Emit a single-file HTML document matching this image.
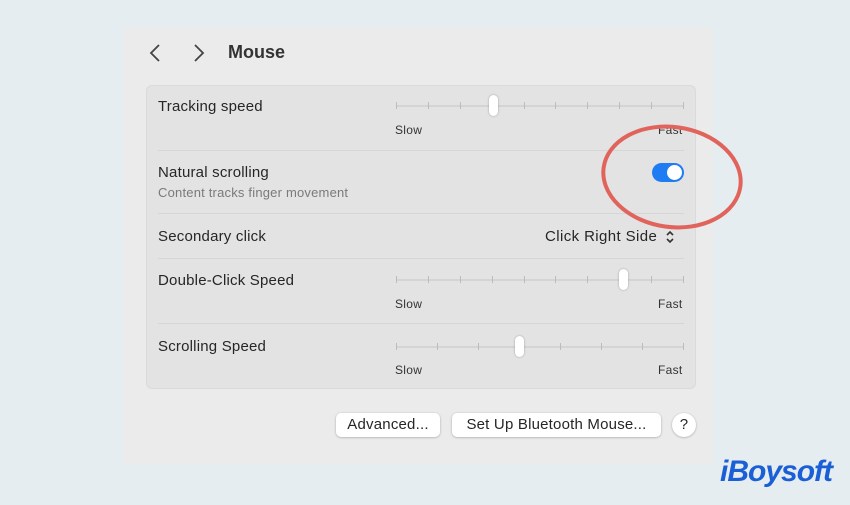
<!DOCTYPE html>
<html><head><style>
body{margin:0;width:850px;height:505px;background:#e5edf1;position:relative;overflow:hidden;font-family:"Liberation Sans",sans-serif;color:#262626}
.a{position:absolute}
.panel{left:124px;top:28px;width:589px;height:436px;background:#ebebeb}
.box{left:146px;top:85px;width:548px;height:302px;background:#e3e3e3;border:1px solid #dadada;border-radius:6px}
.hr{height:1px;background:#d6d6d6;left:158px;width:526px}
.lbl{font-size:15px;left:158px;letter-spacing:0.2px}
.track{height:2px;background:#d4d4d4;left:396px;width:288px}
.tick{width:1px;height:7px;background:#bcbcbc;top:-3px}
.knob{width:9px;height:21px;background:#fff;border-radius:5px;box-shadow:0 0 2px rgba(0,0,0,.3);top:-10px}
.sf{font-size:12px;color:#333;letter-spacing:0.3px}
.btn{background:#fff;border-radius:5px;box-shadow:0 0.5px 2px rgba(0,0,0,.3);font-size:15px;text-align:center;line-height:24px;top:413px;height:24px;letter-spacing:0.2px}
</style></head><body>
<div class="a panel"></div>
<svg class="a" style="left:146px;top:42px" width="70" height="22"><path d="M13 3 L5 11 L13 19" fill="none" stroke="#444" stroke-width="1.8"/><path d="M49 3 L57 11 L49 19" fill="none" stroke="#444" stroke-width="1.8"/></svg>
<div class="a" style="left:228px;top:42px;font-size:18px;font-weight:bold;color:#333">Mouse</div>
<div class="a box"></div>
<div class="a lbl" style="top:98px">Tracking speed</div>
<div class="a hr" style="top:150px"></div>
<div class="a lbl" style="top:164px">Natural scrolling</div>
<div class="a" style="left:158px;top:185px;font-size:13px;color:#7a7a7a;letter-spacing:0.2px">Content tracks finger movement</div>
<div class="a hr" style="top:213px"></div>
<div class="a lbl" style="top:228px">Secondary click</div>
<div class="a" style="left:545px;top:228px;font-size:15px;letter-spacing:0.4px">Click Right Side</div>
<svg class="a" style="left:664px;top:229px" width="12" height="16"><path d="M3 6 L6 3 L9 6 M3 10 L6 13 L9 10" fill="none" stroke="#333" stroke-width="1.6"/></svg>
<div class="a hr" style="top:258px"></div>
<div class="a lbl" style="top:272px">Double-Click Speed</div>
<div class="a hr" style="top:323px"></div>
<div class="a lbl" style="top:338px">Scrolling Speed</div>

<div id="s1" class="a track" style="top:105px"></div>
<div class="a sf" style="left:395px;top:123px">Slow</div><div class="a sf" style="left:658px;top:123px">Fast</div>
<div id="s2" class="a track" style="top:279px"></div>
<div class="a sf" style="left:395px;top:297px">Slow</div><div class="a sf" style="left:658px;top:297px">Fast</div>
<div id="s3" class="a track" style="top:346px"></div>
<div class="a sf" style="left:395px;top:363px">Slow</div><div class="a sf" style="left:658px;top:363px">Fast</div>

<div class="a" style="left:652px;top:163px;width:32px;height:19px;border-radius:10px;background:#1f7cf2"></div>
<div class="a" style="left:667px;top:165px;width:15px;height:15px;border-radius:50%;background:#fff"></div>
<svg class="a" style="left:595px;top:115px" width="160" height="125"><ellipse cx="77" cy="62" rx="69" ry="50" transform="rotate(8 77 62)" fill="none" stroke="#e0645c" stroke-width="4"/></svg>

<div class="a btn" style="left:336px;width:104px">Advanced...</div>
<div class="a btn" style="left:452px;width:209px">Set Up Bluetooth Mouse...</div>
<div class="a btn" style="left:672px;width:24px;border-radius:50%">?</div>
<div class="a" style="left:720px;top:455px;font-size:30px;font-weight:bold;font-style:italic;color:#1b5fd6;letter-spacing:-1px">iBoysoft</div>
<script>
function sl(id,n,k){var t=document.getElementById(id);for(var i=0;i<=n;i++){var d=document.createElement('div');d.className='a tick';d.style.left=Math.round(i*287/n)+'px';t.appendChild(d);}var kn=document.createElement('div');kn.className='a knob';kn.style.left=(k-396-4)+'px';t.appendChild(kn);}
sl('s1',9,493);sl('s2',9,623);sl('s3',7,519);
</script>
</body></html>
